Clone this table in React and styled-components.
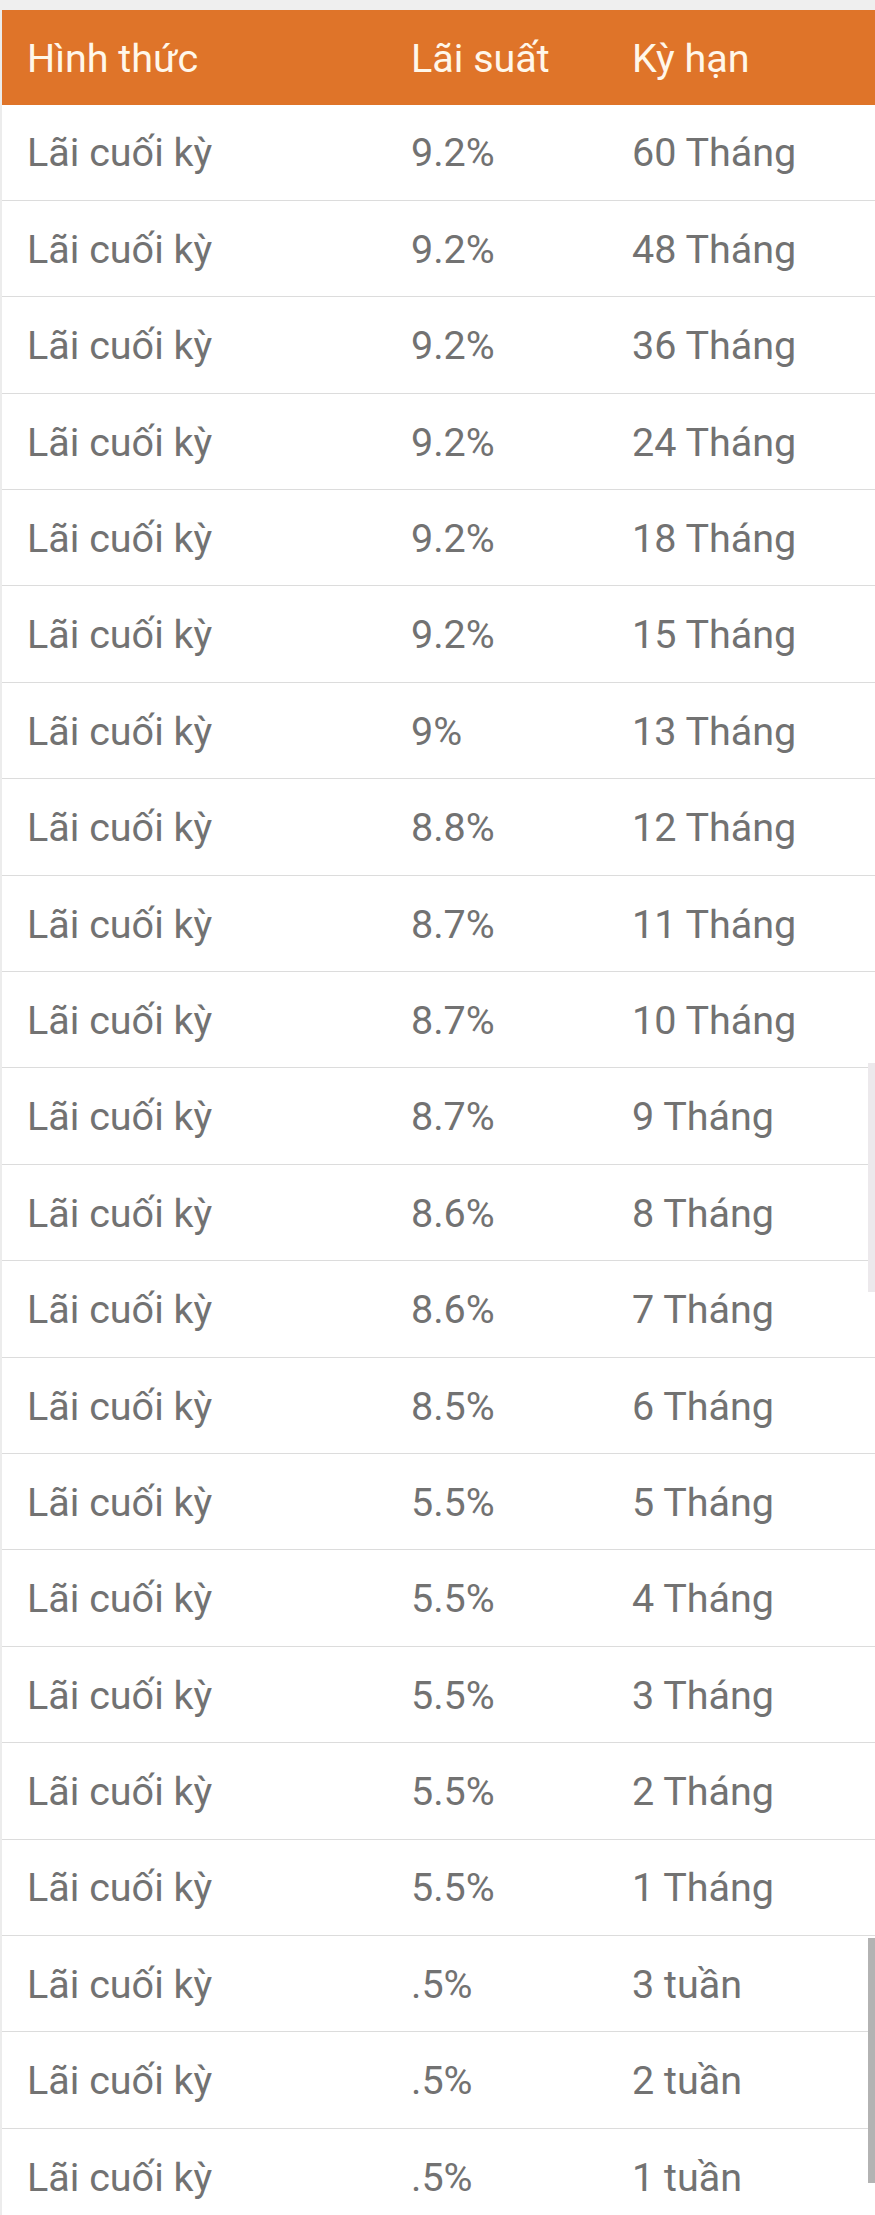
import React from 'react';
import styled, { createGlobalStyle } from 'styled-components';

const GlobalStyle = createGlobalStyle`
  html, body {
    margin: 0;
    padding: 0;
    background: #ffffff;
    font-family: Roboto, "Noto Sans", "Liberation Sans", sans-serif;
  }
`;

const Page = styled.div`
  width: 875px;
  height: 2215px;
  overflow: hidden;
  position: relative;
  background: #ffffff;
`;

const TopStrip = styled.div`
  height: 10px;
  background: #efefef;
`;

const Table = styled.div`
  display: flex;
  flex-direction: column;
  border-left: 2px solid #ececec;
`;

const Row = styled.div`
  display: grid;
  grid-template-columns: 384px 221px 1fr;
  align-items: center;
  box-sizing: border-box;
  height: ${({ $head }) => ($head ? '94.5px' : '96.4px')};
  padding-top: 2px;
  background: ${({ $head }) => ($head ? '#df7429' : '#ffffff')};
  border-bottom: ${({ $head }) => ($head ? 'none' : '1px solid #dcdcdc')};
`;

const Cell = styled.div`
  padding-left: 25px;
  font-size: 39.5px;
  line-height: 1;
  color: ${({ $head }) => ($head ? '#fff7ea' : '#727272')};
  white-space: nowrap;
`;

const Thumb = styled.div`
  position: absolute;
  right: 0;
  width: 7px;
  top: ${({ $top }) => $top}px;
  height: ${({ $height }) => $height}px;
  background: ${({ $dark }) => ($dark ? '#b3b3b3' : '#ece9ec')};
`;

const rows = [
  ['9.2%', '60 Tháng'],
  ['9.2%', '48 Tháng'],
  ['9.2%', '36 Tháng'],
  ['9.2%', '24 Tháng'],
  ['9.2%', '18 Tháng'],
  ['9.2%', '15 Tháng'],
  ['9%', '13 Tháng'],
  ['8.8%', '12 Tháng'],
  ['8.7%', '11 Tháng'],
  ['8.7%', '10 Tháng'],
  ['8.7%', '9 Tháng'],
  ['8.6%', '8 Tháng'],
  ['8.6%', '7 Tháng'],
  ['8.5%', '6 Tháng'],
  ['5.5%', '5 Tháng'],
  ['5.5%', '4 Tháng'],
  ['5.5%', '3 Tháng'],
  ['5.5%', '2 Tháng'],
  ['5.5%', '1 Tháng'],
  ['.5%', '3 tuần'],
  ['.5%', '2 tuần'],
  ['.5%', '1 tuần'],
];

export default function App() {
  return (
    <Page>
      <GlobalStyle />
      <TopStrip />
      <Table>
        <Row $head>
          <Cell $head>Hình thức</Cell>
          <Cell $head>Lãi suất</Cell>
          <Cell $head>Kỳ hạn</Cell>
        </Row>
        {rows.map(([rate, term], i) => (
          <Row key={i}>
            <Cell>Lãi cuối kỳ</Cell>
            <Cell>{rate}</Cell>
            <Cell>{term}</Cell>
          </Row>
        ))}
      </Table>
      <Thumb $top={1063} $height={229} />
      <Thumb $dark $top={1938} $height={245} />
    </Page>
  );
}
